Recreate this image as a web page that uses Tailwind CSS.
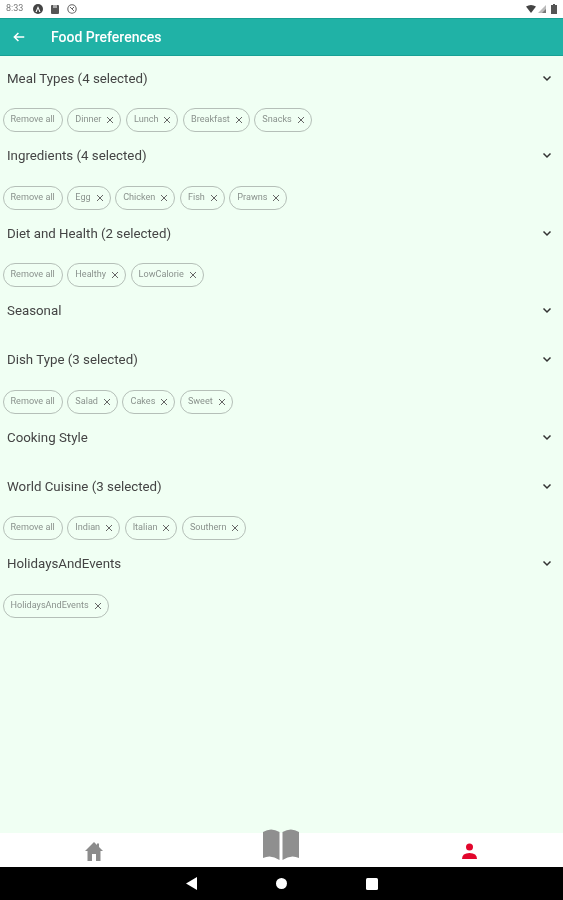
<!DOCTYPE html>
<html lang="en">
<head>
  <meta charset="UTF-8">
  <title>Food Preferences</title>
  <script src="https://cdn.jsdelivr.net/npm/@tailwindcss/browser@4"></script>
</head>
<body class="bg-white">
  <div class="flex flex-col h-[900px] w-[563px] overflow-hidden font-['Roboto',sans-serif] blur-[0.5px]">
    <!-- Status bar -->
    <div class="h-[18px] bg-white flex items-center pl-[6px] pr-[6px] text-[#777]">
      <span class="text-[9px] w-[27px]">8:33</span>
      <svg width="10" height="10" viewBox="0 0 10 10"><circle cx="5" cy="5" r="5" fill="#444"/><path d="M5 2 L7.500 8 H6.300 L5 4.600 L3.700 8 H2.500 Z" fill="#fff"/></svg>
      <svg class="ml-[8px]" width="8" height="9" viewBox="0 0 8 9"><path d="M1 0 H7 Q8 0 8 1 V8 Q8 9 7 9 H1 Q0 9 0 8 V1 Q0 0 1 0Z" fill="#555"/><path d="M2 0 V3 H6 V0" fill="#aaa"/></svg>
      <svg class="ml-[8px]" width="10" height="10" viewBox="0 0 10 10"><circle cx="5" cy="5" r="4.200" fill="none" stroke="#666" stroke-width="1.100"/><path d="M3 3 L7 7 M7 3 L5 5" stroke="#666" stroke-width="1"/></svg>
      <div class="ml-auto flex items-center gap-[2px]">
        <svg width="10" height="8" viewBox="0 0 10 8"><path d="M0 1.500 Q5 -1.500 10 1.500 L5 8Z" fill="#444"/></svg>
        <svg width="8" height="8" viewBox="0 0 8 8"><path d="M0 8 L8 0 V8Z" fill="#bbb"/><path d="M4 8 L8 4 V8Z" fill="#777"/></svg>
        <svg class="ml-[3px]" width="6" height="10" viewBox="0 0 6 10"><path d="M2 0 H4 V1 H6 V10 H0 V1 H2Z" fill="#555"/></svg>
      </div>
    </div>
    <!-- App bar -->
    <div class="h-[38px] bg-[#20b2a6] border-y border-[#17a195] flex items-center pl-[12px] text-white">
      <svg width="14" height="14" viewBox="0 0 24 24" fill="none" stroke="#fff" stroke-width="2.600"><path d="M21 12 H4 M11 5 L4 12 L11 19"/></svg>
      <h1 class="ml-[25px] pt-[1px] text-[14px] font-medium">Food Preferences</h1>
    </div>
    <!-- Sections -->
    <main class="flex-1 bg-[#f0fff3] text-[#444]">
      <section>
        <div class="h-[49px] pb-[4px] pl-[7px] pr-[11px] flex items-center justify-between text-[13.300px]"><span>Meal Types (4 selected)</span><svg class="-mt-[1px]" width="10" height="7" viewBox="0 0 10 7" fill="none" stroke="#333" stroke-width="1.500"><path d="M1.500 1.500 L5 5 L8.500 1.500"/></svg></div>
        <div class="flex gap-[4.500px] pl-[2.500px] pt-[3px] pb-[1.500px] text-[9.100px] text-[#8a928d]">
          <span class="h-[24px] px-[7px] flex items-center rounded-full border border-[#b5bfb8]">Remove all</span>
          <span class="h-[24px] pl-[7px] pr-[6px] flex items-center gap-[5px] rounded-full border border-[#b5bfb8]">Dinner<svg width="8" height="8" viewBox="0 0 8 8" stroke="#666"><path d="M1 1 L7 7 M7 1 L1 7"/></svg></span>
          <span class="h-[24px] pl-[7px] pr-[6px] flex items-center gap-[5px] rounded-full border border-[#b5bfb8]">Lunch<svg width="8" height="8" viewBox="0 0 8 8" stroke="#666"><path d="M1 1 L7 7 M7 1 L1 7"/></svg></span>
          <span class="h-[24px] pl-[7px] pr-[6px] flex items-center gap-[5px] rounded-full border border-[#b5bfb8]">Breakfast<svg width="8" height="8" viewBox="0 0 8 8" stroke="#666"><path d="M1 1 L7 7 M7 1 L1 7"/></svg></span>
          <span class="h-[24px] pl-[7px] pr-[6px] flex items-center gap-[5px] rounded-full border border-[#b5bfb8]">Snacks<svg width="8" height="8" viewBox="0 0 8 8" stroke="#666"><path d="M1 1 L7 7 M7 1 L1 7"/></svg></span>
        </div>
      </section>
      <section>
        <div class="h-[49px] pb-[4px] pl-[7px] pr-[11px] flex items-center justify-between text-[13.300px]"><span>Ingredients (4 selected)</span><svg class="-mt-[1px]" width="10" height="7" viewBox="0 0 10 7" fill="none" stroke="#333" stroke-width="1.500"><path d="M1.500 1.500 L5 5 L8.500 1.500"/></svg></div>
        <div class="flex gap-[4.500px] pl-[2.500px] pt-[3px] pb-[1.500px] text-[9.100px] text-[#8a928d]">
          <span class="h-[24px] px-[7px] flex items-center rounded-full border border-[#b5bfb8]">Remove all</span>
          <span class="h-[24px] pl-[7px] pr-[6px] flex items-center gap-[5px] rounded-full border border-[#b5bfb8]">Egg<svg width="8" height="8" viewBox="0 0 8 8" stroke="#666"><path d="M1 1 L7 7 M7 1 L1 7"/></svg></span>
          <span class="h-[24px] pl-[7px] pr-[6px] flex items-center gap-[5px] rounded-full border border-[#b5bfb8]">Chicken<svg width="8" height="8" viewBox="0 0 8 8" stroke="#666"><path d="M1 1 L7 7 M7 1 L1 7"/></svg></span>
          <span class="h-[24px] pl-[7px] pr-[6px] flex items-center gap-[5px] rounded-full border border-[#b5bfb8]">Fish<svg width="8" height="8" viewBox="0 0 8 8" stroke="#666"><path d="M1 1 L7 7 M7 1 L1 7"/></svg></span>
          <span class="h-[24px] pl-[7px] pr-[6px] flex items-center gap-[5px] rounded-full border border-[#b5bfb8]">Prawns<svg width="8" height="8" viewBox="0 0 8 8" stroke="#666"><path d="M1 1 L7 7 M7 1 L1 7"/></svg></span>
        </div>
      </section>
      <section>
        <div class="h-[49px] pb-[4px] pl-[7px] pr-[11px] flex items-center justify-between text-[13.300px]"><span>Diet and Health (2 selected)</span><svg class="-mt-[1px]" width="10" height="7" viewBox="0 0 10 7" fill="none" stroke="#333" stroke-width="1.500"><path d="M1.500 1.500 L5 5 L8.500 1.500"/></svg></div>
        <div class="flex gap-[4.500px] pl-[2.500px] pt-[3px] pb-[1.500px] text-[9.100px] text-[#8a928d]">
          <span class="h-[24px] px-[7px] flex items-center rounded-full border border-[#b5bfb8]">Remove all</span>
          <span class="h-[24px] pl-[7px] pr-[6px] flex items-center gap-[5px] rounded-full border border-[#b5bfb8]">Healthy<svg width="8" height="8" viewBox="0 0 8 8" stroke="#666"><path d="M1 1 L7 7 M7 1 L1 7"/></svg></span>
          <span class="h-[24px] pl-[7px] pr-[6px] flex items-center gap-[5px] rounded-full border border-[#b5bfb8]">LowCalorie<svg width="8" height="8" viewBox="0 0 8 8" stroke="#666"><path d="M1 1 L7 7 M7 1 L1 7"/></svg></span>
        </div>
      </section>
      <section>
        <div class="h-[49px] pb-[4px] pl-[7px] pr-[11px] flex items-center justify-between text-[13.300px]"><span>Seasonal</span><svg class="-mt-[1px]" width="10" height="7" viewBox="0 0 10 7" fill="none" stroke="#333" stroke-width="1.500"><path d="M1.500 1.500 L5 5 L8.500 1.500"/></svg></div>
      </section>
      <section>
        <div class="h-[49px] pb-[4px] pl-[7px] pr-[11px] flex items-center justify-between text-[13.300px]"><span>Dish Type (3 selected)</span><svg class="-mt-[1px]" width="10" height="7" viewBox="0 0 10 7" fill="none" stroke="#333" stroke-width="1.500"><path d="M1.500 1.500 L5 5 L8.500 1.500"/></svg></div>
        <div class="flex gap-[4.500px] pl-[2.500px] pt-[3px] pb-[1.500px] text-[9.100px] text-[#8a928d]">
          <span class="h-[24px] px-[7px] flex items-center rounded-full border border-[#b5bfb8]">Remove all</span>
          <span class="h-[24px] pl-[7px] pr-[6px] flex items-center gap-[5px] rounded-full border border-[#b5bfb8]">Salad<svg width="8" height="8" viewBox="0 0 8 8" stroke="#666"><path d="M1 1 L7 7 M7 1 L1 7"/></svg></span>
          <span class="h-[24px] pl-[7px] pr-[6px] flex items-center gap-[5px] rounded-full border border-[#b5bfb8]">Cakes<svg width="8" height="8" viewBox="0 0 8 8" stroke="#666"><path d="M1 1 L7 7 M7 1 L1 7"/></svg></span>
          <span class="h-[24px] pl-[7px] pr-[6px] flex items-center gap-[5px] rounded-full border border-[#b5bfb8]">Sweet<svg width="8" height="8" viewBox="0 0 8 8" stroke="#666"><path d="M1 1 L7 7 M7 1 L1 7"/></svg></span>
        </div>
      </section>
      <section>
        <div class="h-[49px] pb-[4px] pl-[7px] pr-[11px] flex items-center justify-between text-[13.300px]"><span>Cooking Style</span><svg class="-mt-[1px]" width="10" height="7" viewBox="0 0 10 7" fill="none" stroke="#333" stroke-width="1.500"><path d="M1.500 1.500 L5 5 L8.500 1.500"/></svg></div>
      </section>
      <section>
        <div class="h-[49px] pb-[4px] pl-[7px] pr-[11px] flex items-center justify-between text-[13.300px]"><span>World Cuisine (3 selected)</span><svg class="-mt-[1px]" width="10" height="7" viewBox="0 0 10 7" fill="none" stroke="#333" stroke-width="1.500"><path d="M1.500 1.500 L5 5 L8.500 1.500"/></svg></div>
        <div class="flex gap-[4.500px] pl-[2.500px] pt-[3px] pb-[1.500px] text-[9.100px] text-[#8a928d]">
          <span class="h-[24px] px-[7px] flex items-center rounded-full border border-[#b5bfb8]">Remove all</span>
          <span class="h-[24px] pl-[7px] pr-[6px] flex items-center gap-[5px] rounded-full border border-[#b5bfb8]">Indian<svg width="8" height="8" viewBox="0 0 8 8" stroke="#666"><path d="M1 1 L7 7 M7 1 L1 7"/></svg></span>
          <span class="h-[24px] pl-[7px] pr-[6px] flex items-center gap-[5px] rounded-full border border-[#b5bfb8]">Italian<svg width="8" height="8" viewBox="0 0 8 8" stroke="#666"><path d="M1 1 L7 7 M7 1 L1 7"/></svg></span>
          <span class="h-[24px] pl-[7px] pr-[6px] flex items-center gap-[5px] rounded-full border border-[#b5bfb8]">Southern<svg width="8" height="8" viewBox="0 0 8 8" stroke="#666"><path d="M1 1 L7 7 M7 1 L1 7"/></svg></span>
        </div>
      </section>
      <section>
        <div class="h-[49px] pb-[4px] pl-[7px] pr-[11px] flex items-center justify-between text-[13.300px]"><span>HolidaysAndEvents</span><svg class="-mt-[1px]" width="10" height="7" viewBox="0 0 10 7" fill="none" stroke="#333" stroke-width="1.500"><path d="M1.500 1.500 L5 5 L8.500 1.500"/></svg></div>
        <div class="flex gap-[4.500px] pl-[2.500px] pt-[3px] pb-[1.500px] text-[9.100px] text-[#8a928d]">
          <span class="h-[24px] pl-[7px] pr-[6px] flex items-center gap-[5px] rounded-full border border-[#b5bfb8]">HolidaysAndEvents<svg width="8" height="8" viewBox="0 0 8 8" stroke="#666"><path d="M1 1 L7 7 M7 1 L1 7"/></svg></span>
        </div>
      </section>
    </main>
    <!-- Bottom nav -->
    <nav class="h-[34px] bg-white grid grid-cols-3 items-center">
      <div class="flex justify-center pt-[3px]">
        <svg width="18" height="19" viewBox="0 0 18 19"><path d="M9 0 L12 3 V1.500 H14 V5 L18 9 H15.500 V19 H11 V12 H7 V19 H2.500 V9 H0 Z" fill="#8c8c8c"/></svg>
      </div>
      <div class="flex justify-center">
        <svg class="-mt-[11px]" width="36" height="32" viewBox="0 0 36 32"><path d="M0 3 Q8 -2 16.500 3 V31 Q8 25 0 29Z M19.500 3 Q28 -2 36 3 V29 Q28 25 19.500 31Z" fill="#8f8f8f"/></svg>
      </div>
      <div class="flex justify-center pt-[3px]">
        <svg width="17" height="17" viewBox="0 0 17 17"><circle cx="8.500" cy="4" r="3.500" fill="#e2062c"/><path d="M1 16 Q1 10 8.500 10 Q16 10 16 16Z" fill="#e2062c"/></svg>
      </div>
    </nav>
    <!-- Android nav -->
    <div class="h-[33px] bg-black flex items-center justify-center gap-[79px]">
      <svg width="11" height="13" viewBox="0 0 11 13"><path d="M0 6.500 L11 0 V13Z" fill="#fff"/></svg>
      <svg width="11" height="11" viewBox="0 0 11 11"><circle cx="5.500" cy="5.500" r="5.500" fill="#fff"/></svg>
      <svg width="12" height="12" viewBox="0 0 12 12"><rect width="12" height="12" rx="1.500" fill="#fff"/></svg>
    </div>
  </div>
</body>
</html>
